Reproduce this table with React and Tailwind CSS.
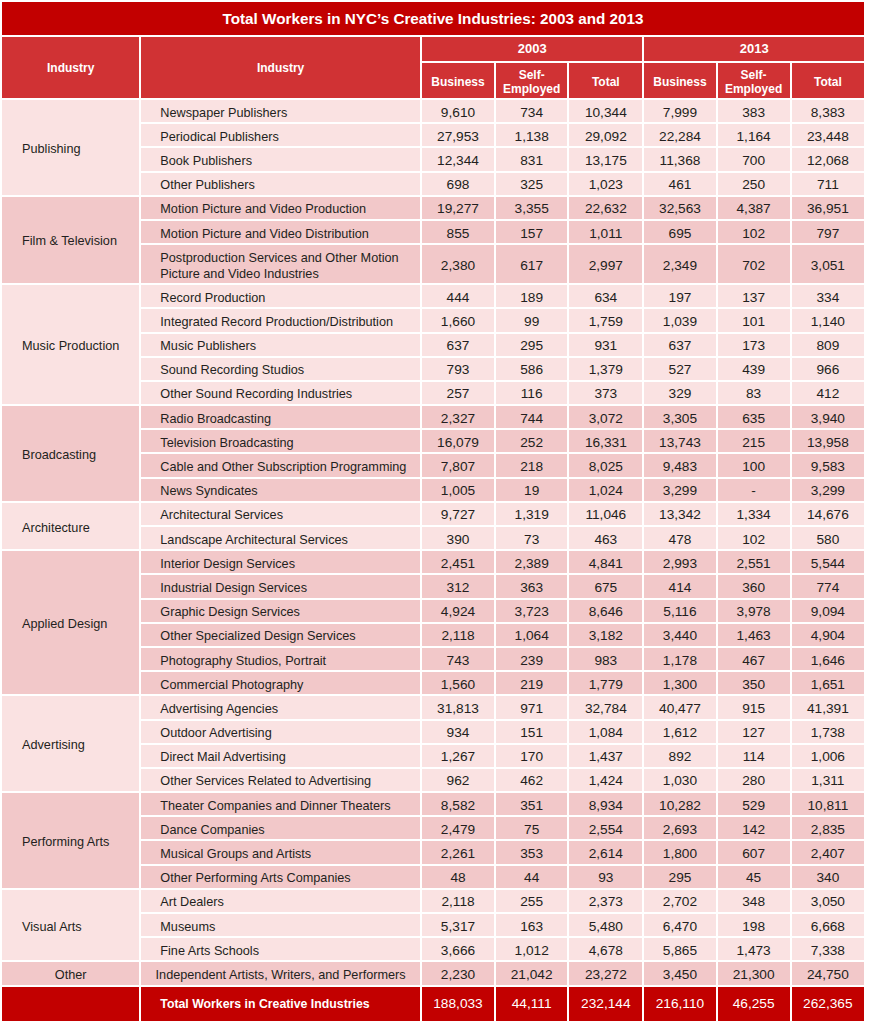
import React from 'react';

const groups = [
  { name: 'Publishing', rows: [
    ['Newspaper Publishers', '9,610', '734', '10,344', '7,999', '383', '8,383'],
    ['Periodical Publishers', '27,953', '1,138', '29,092', '22,284', '1,164', '23,448'],
    ['Book Publishers', '12,344', '831', '13,175', '11,368', '700', '12,068'],
    ['Other Publishers', '698', '325', '1,023', '461', '250', '711'],
  ] },
  { name: 'Film & Television', rows: [
    ['Motion Picture and Video Production', '19,277', '3,355', '22,632', '32,563', '4,387', '36,951'],
    ['Motion Picture and Video Distribution', '855', '157', '1,011', '695', '102', '797'],
    ['Postproduction Services and Other Motion Picture and Video Industries', '2,380', '617', '2,997', '2,349', '702', '3,051'],
  ] },
  { name: 'Music Production', rows: [
    ['Record Production', '444', '189', '634', '197', '137', '334'],
    ['Integrated Record Production/Distribution', '1,660', '99', '1,759', '1,039', '101', '1,140'],
    ['Music Publishers', '637', '295', '931', '637', '173', '809'],
    ['Sound Recording Studios', '793', '586', '1,379', '527', '439', '966'],
    ['Other Sound Recording Industries', '257', '116', '373', '329', '83', '412'],
  ] },
  { name: 'Broadcasting', rows: [
    ['Radio Broadcasting', '2,327', '744', '3,072', '3,305', '635', '3,940'],
    ['Television Broadcasting', '16,079', '252', '16,331', '13,743', '215', '13,958'],
    ['Cable and Other Subscription Programming', '7,807', '218', '8,025', '9,483', '100', '9,583'],
    ['News Syndicates', '1,005', '19', '1,024', '3,299', '-', '3,299'],
  ] },
  { name: 'Architecture', rows: [
    ['Architectural Services', '9,727', '1,319', '11,046', '13,342', '1,334', '14,676'],
    ['Landscape Architectural Services', '390', '73', '463', '478', '102', '580'],
  ] },
  { name: 'Applied Design', rows: [
    ['Interior Design Services', '2,451', '2,389', '4,841', '2,993', '2,551', '5,544'],
    ['Industrial Design Services', '312', '363', '675', '414', '360', '774'],
    ['Graphic Design Services', '4,924', '3,723', '8,646', '5,116', '3,978', '9,094'],
    ['Other Specialized Design Services', '2,118', '1,064', '3,182', '3,440', '1,463', '4,904'],
    ['Photography Studios, Portrait', '743', '239', '983', '1,178', '467', '1,646'],
    ['Commercial Photography', '1,560', '219', '1,779', '1,300', '350', '1,651'],
  ] },
  { name: 'Advertising', rows: [
    ['Advertising Agencies', '31,813', '971', '32,784', '40,477', '915', '41,391'],
    ['Outdoor Advertising', '934', '151', '1,084', '1,612', '127', '1,738'],
    ['Direct Mail Advertising', '1,267', '170', '1,437', '892', '114', '1,006'],
    ['Other Services Related to Advertising', '962', '462', '1,424', '1,030', '280', '1,311'],
  ] },
  { name: 'Performing Arts', rows: [
    ['Theater Companies and Dinner Theaters', '8,582', '351', '8,934', '10,282', '529', '10,811'],
    ['Dance Companies', '2,479', '75', '2,554', '2,693', '142', '2,835'],
    ['Musical Groups and Artists', '2,261', '353', '2,614', '1,800', '607', '2,407'],
    ['Other Performing Arts Companies', '48', '44', '93', '295', '45', '340'],
  ] },
  { name: 'Visual Arts', rows: [
    ['Art Dealers', '2,118', '255', '2,373', '2,702', '348', '3,050'],
    ['Museums', '5,317', '163', '5,480', '6,470', '198', '6,668'],
    ['Fine Arts Schools', '3,666', '1,012', '4,678', '5,865', '1,473', '7,338'],
  ] },
  { name: 'Other', center: true, rows: [
    ['Independent Artists, Writers, and Performers', '2,230', '21,042', '23,272', '3,450', '21,300', '24,750'],
  ] },
];

const totals = ['188,033', '44,111', '232,144', '216,110', '46,255', '262,365'];

const font = { fontFamily: '"Liberation Sans", Arial, sans-serif' };

export default function App() {
  return (
    <div className="bg-white w-[869px] h-[1024px] overflow-hidden" style={font}>
      <table className="table-fixed w-[866px] border-separate border-spacing-[2px] text-[#231f20]">
        <colgroup>
          <col className="w-[137px]" />
          <col className="w-[278px]" />
          <col className="w-[72px]" />
          <col className="w-[71px]" />
          <col className="w-[73px]" />
          <col className="w-[71px]" />
          <col className="w-[72px]" />
          <col className="w-[72px]" />
        </colgroup>
        <thead>
          <tr className="leading-[18px]">
            <th colSpan={8} className="h-[33px] p-0 pt-[1px] bg-[#c20000] text-white text-[15.25px] font-bold text-center">
              Total Workers in NYC’s Creative Industries: 2003 and 2013
            </th>
          </tr>
          <tr className="bg-[#d03234] text-white font-bold leading-[16px]">
            <th rowSpan={2} className="p-0 pt-[1px] text-[12px] text-center">Industry</th>
            <th rowSpan={2} className="p-0 pt-[1px] text-[12px] text-center">Industry</th>
            <th colSpan={3} className="h-[24px] p-0 text-[13px] text-center">2003</th>
            <th colSpan={3} className="h-[24px] p-0 text-[13px] text-center">2013</th>
          </tr>
          <tr className="bg-[#d03234] text-white font-bold text-[12px] leading-[14px]">
            {[0, 1].map((k) => (
              <React.Fragment key={k}>
                <th className="h-[35px] p-0 pt-[2px] text-center">Business</th>
                <th className="h-[35px] p-0 pt-[2px] text-center">Self-<br />Employed</th>
                <th className="h-[35px] p-0 pt-[2px] text-center">Total</th>
              </React.Fragment>
            ))}
          </tr>
        </thead>
        <tbody>
          {groups.map((g, gi) => {
            const bg = gi % 2 === 0 ? 'bg-[#fae2e2]' : 'bg-[#f2c8c9]';
            return g.rows.map((r, ri) => {
              const tall = r[0].startsWith('Postproduction');
              return (
                <tr key={g.name + ri} className={`${bg} leading-[16px]`}>
                  {ri === 0 && (
                    <td
                      rowSpan={g.rows.length}
                      className={`p-0 pt-[3px] text-[12.7px] align-middle ${g.center ? 'text-center' : 'text-left pl-[20px]'}`}
                    >
                      {g.name}
                    </td>
                  )}
                  <td
                    className={`pt-[3px] pb-0 text-[12.7px] ${tall ? 'h-[38px]' : 'h-[22.2px]'} ${g.center ? 'text-center px-0' : 'text-left pl-[19px] pr-[10px]'}`}
                  >
                    {r[0]}
                  </td>
                  {r.slice(1).map((v, vi) => (
                    <td key={vi} className="p-0 pt-[3px] text-center text-[13.7px]">{v}</td>
                  ))}
                </tr>
              );
            });
          })}
          <tr className="bg-[#c20000] text-white leading-[16px]">
            <td className="h-[34px] p-0"></td>
            <td className="p-0 pt-[1px] pl-[19px] text-left font-bold text-[12.3px]">Total Workers in Creative Industries</td>
            {totals.map((v, i) => (
              <td key={i} className="p-0 pt-[1px] text-center text-[13.7px]">{v}</td>
            ))}
          </tr>
        </tbody>
      </table>
    </div>
  );
}
